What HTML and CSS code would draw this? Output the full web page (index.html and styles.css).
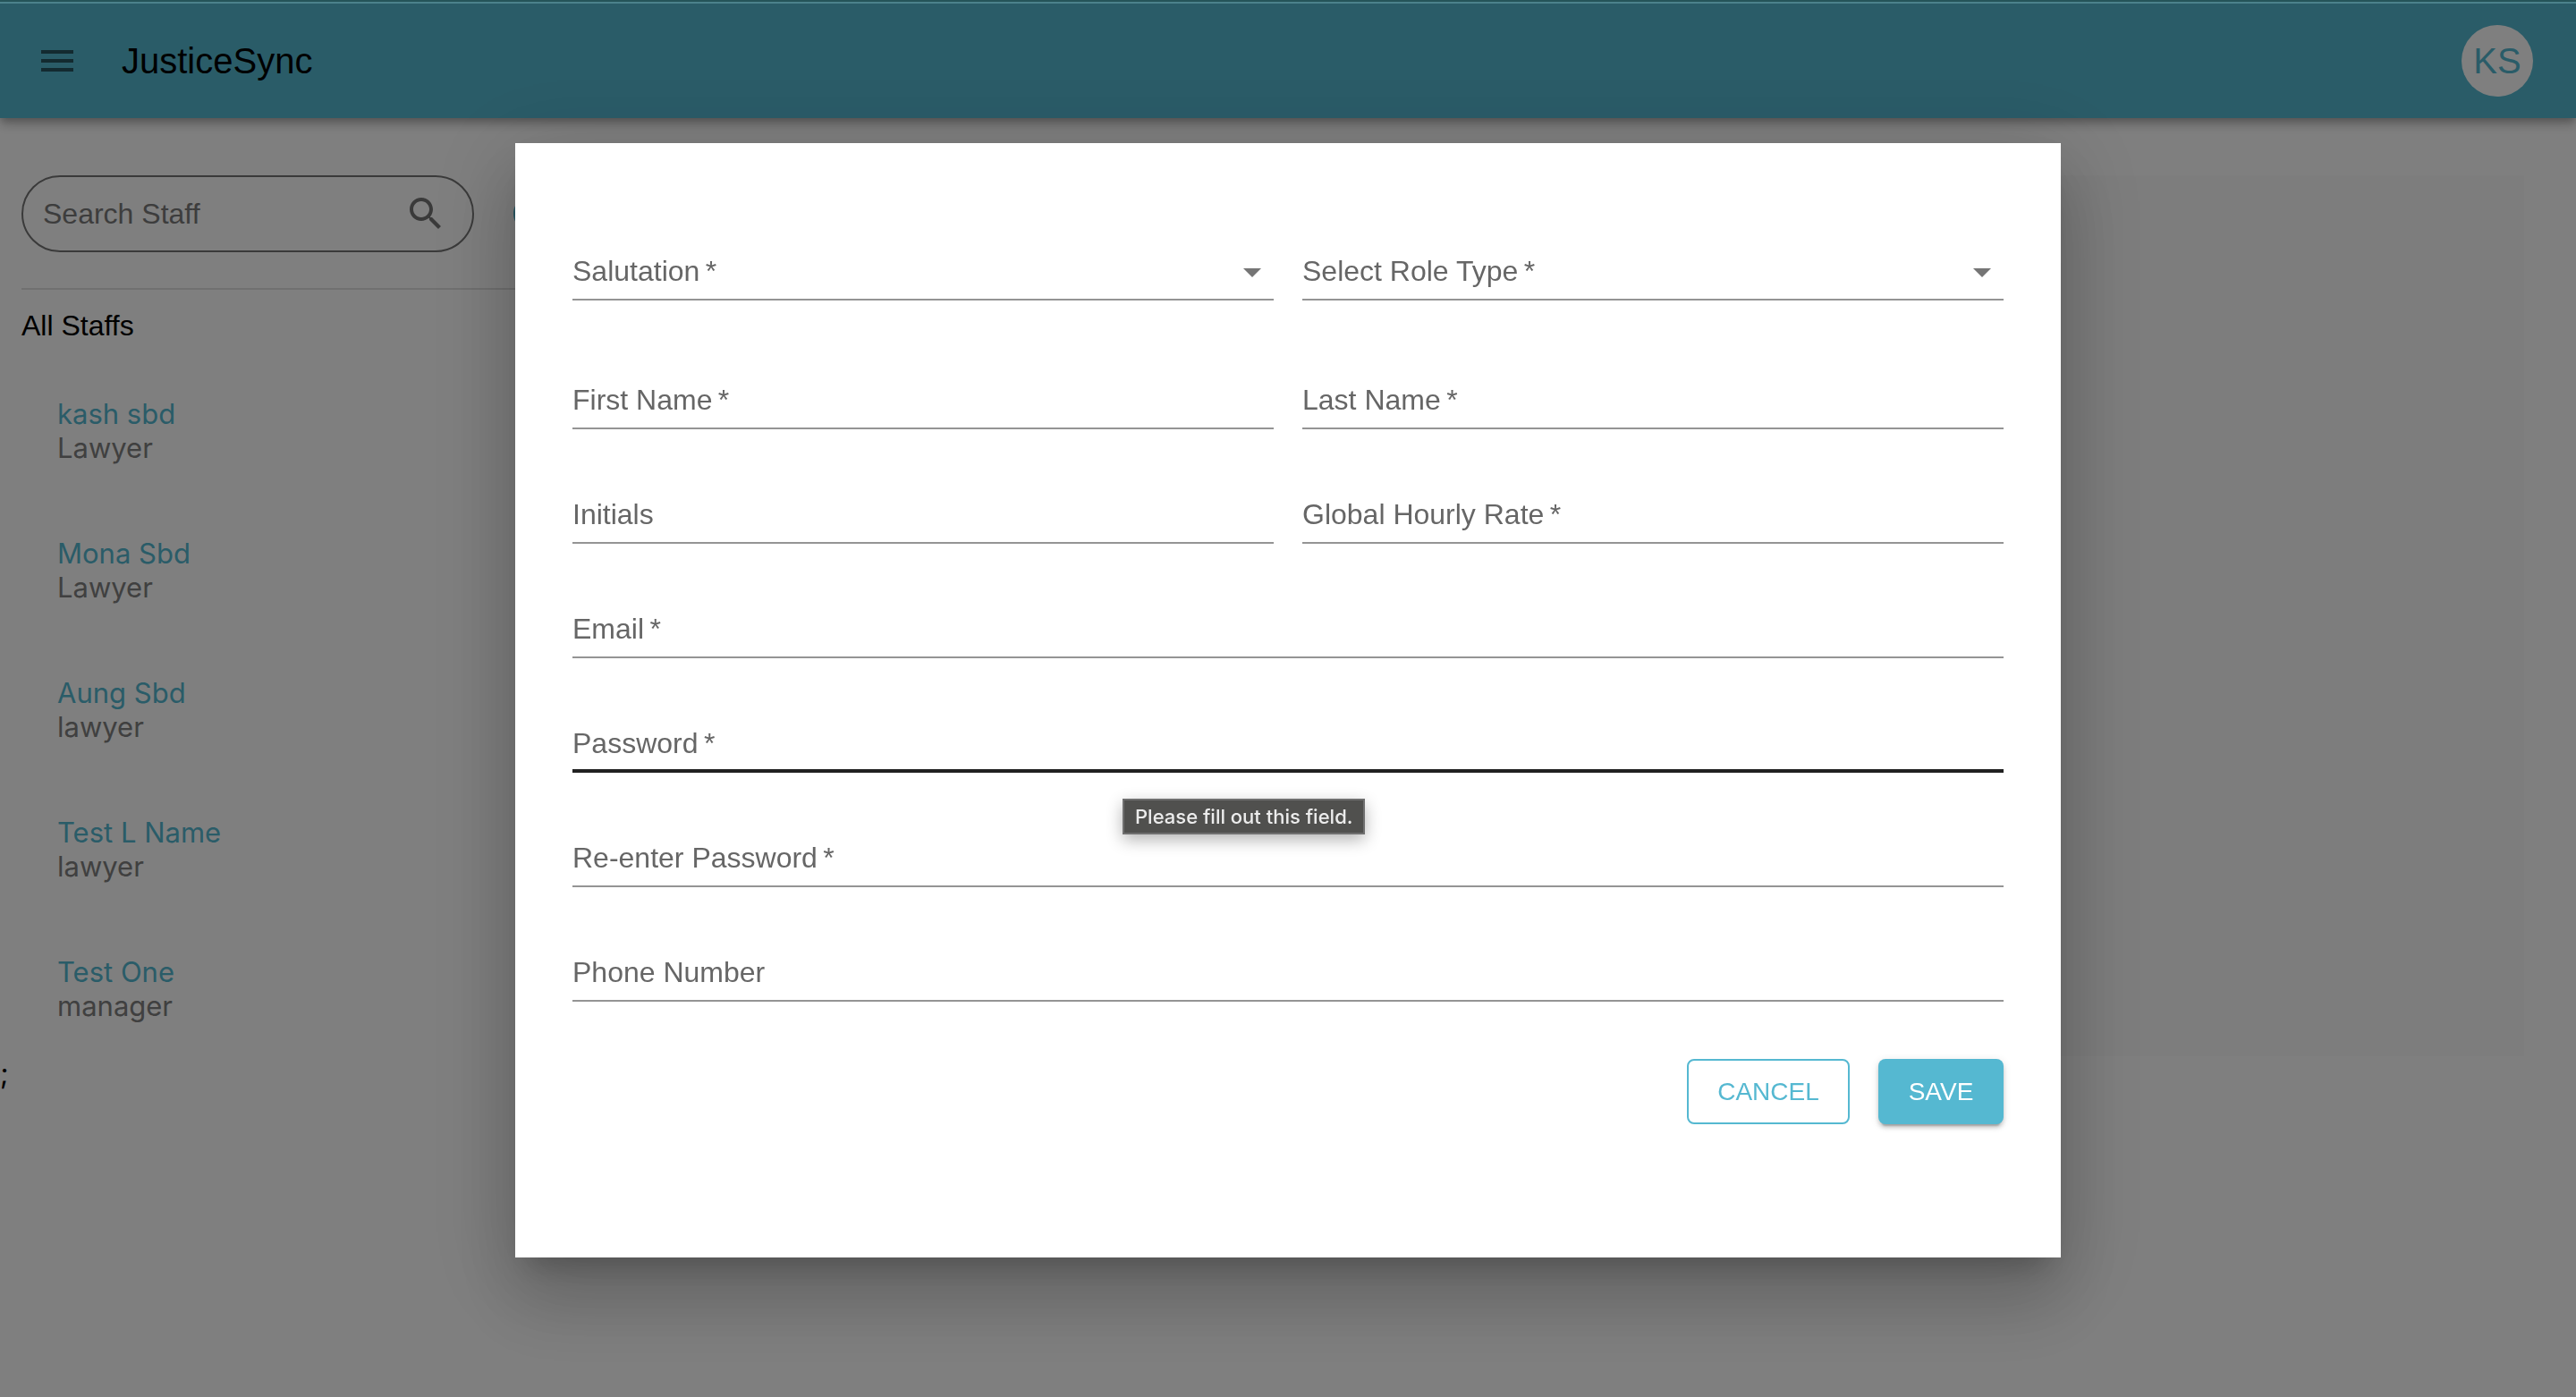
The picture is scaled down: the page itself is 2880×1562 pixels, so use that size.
FILE: index.html
```html
<!DOCTYPE html>
<html lang="en">
<head>
<meta charset="utf-8">
<meta name="viewport" content="width=device-width, initial-scale=1">
<title>JusticeSync</title>
<link rel="stylesheet" href="styles.css">
</head>
<body>
<header class="app-bar">
  <button class="icon-button" type="button" aria-label="Menu">
    <svg class="icon" viewBox="0 0 24 24"><path d="M3 18h18v-2H3v2zm0-5h18v-2H3v2zm0-7v2h18V6H3z"/></svg>
  </button>
  <h1 class="brand">JusticeSync</h1>
  <button class="avatar" type="button">KS</button>
</header>

<main class="page">
  <aside class="sidebar">
    <div class="toolbar">
      <div class="search">
        <input class="search-input" type="search" placeholder="Search Staff" aria-label="Search Staff">
        <svg class="icon" viewBox="0 0 24 24"><path d="M15.5 14h-.79l-.28-.27C15.41 12.59 16 11.11 16 9.5 16 5.91 13.09 3 9.5 3S3 5.91 3 9.5 5.91 16 9.5 16c1.61 0 3.09-.59 4.23-1.57l.27.28v.79l5 4.99L20.49 19l-4.99-5zm-6 0C7.01 14 5 11.99 5 9.5S7.01 5 9.5 5 14 7.01 14 9.5 11.99 14 9.5 14z"/></svg>
      </div>
      <button class="add-button" type="button" aria-label="Add staff">
        <svg class="icon" viewBox="0 0 24 24"><path d="M12 2C6.48 2 2 6.48 2 12s4.48 10 10 10 10-4.48 10-10S17.52 2 12 2zm5 11h-4v4h-2v-4H7v-2h4V7h2v4h4v2z"/></svg>
      </button>
    </div>
    <hr class="divider">
    <h2 class="list-title">All Staffs</h2>
    <ul class="staff-list">
      <li class="staff"><a class="staff-name" href="#">kash sbd</a><span class="staff-role">Lawyer</span></li>
      <li class="staff"><a class="staff-name" href="#">Mona Sbd</a><span class="staff-role">Lawyer</span></li>
      <li class="staff"><a class="staff-name" href="#">Aung Sbd</a><span class="staff-role">lawyer</span></li>
      <li class="staff"><a class="staff-name" href="#">Test L Name</a><span class="staff-role">lawyer</span></li>
      <li class="staff"><a class="staff-name" href="#">Test One</a><span class="staff-role">manager</span></li>
    </ul>
  </aside>
  <section class="details"></section>
</main>
<div class="stray">;</div>

<div class="backdrop">
  <form class="dialog" role="dialog" aria-label="Staff">
    <div class="fields">
      <div class="field field-select">
        <label class="label" for="salutation">Salutation&thinsp;*</label>
        <select class="control" id="salutation" required><option value=""></option></select>
        <svg class="icon arrow" viewBox="0 0 24 24"><path d="M7 10l5 5 5-5z"/></svg>
      </div>
      <div class="field field-select">
        <label class="label" for="role">Select Role Type&thinsp;*</label>
        <select class="control" id="role" required><option value=""></option></select>
        <svg class="icon arrow" viewBox="0 0 24 24"><path d="M7 10l5 5 5-5z"/></svg>
      </div>
      <div class="field">
        <label class="label" for="first">First Name&thinsp;*</label>
        <input class="control" id="first" type="text" required>
      </div>
      <div class="field">
        <label class="label" for="last">Last Name&thinsp;*</label>
        <input class="control" id="last" type="text" required>
      </div>
      <div class="field">
        <label class="label" for="initials">Initials</label>
        <input class="control" id="initials" type="text">
      </div>
      <div class="field">
        <label class="label" for="rate">Global Hourly Rate&thinsp;*</label>
        <input class="control" id="rate" type="text" required>
      </div>
      <div class="field field-wide">
        <label class="label" for="email">Email&thinsp;*</label>
        <input class="control" id="email" type="email" required>
      </div>
      <div class="field field-wide">
        <label class="label" for="password">Password&thinsp;*</label>
        <input class="control control-active" id="password" type="password" required>
        <span class="tooltip" role="tooltip">Please fill out this field.</span>
      </div>
      <div class="field field-wide">
        <label class="label" for="password2">Re-enter Password&thinsp;*</label>
        <input class="control" id="password2" type="password" required>
      </div>
      <div class="field field-wide">
        <label class="label" for="phone">Phone Number</label>
        <input class="control" id="phone" type="tel">
      </div>
    </div>
    <div class="actions">
      <button class="button button-outlined" type="button">CANCEL</button>
      <button class="button button-filled" type="submit">SAVE</button>
    </div>
  </form>
</div>
</body>
</html>
```

FILE: styles.css
```css
:root {
  --primary: #55b8d1;
  --muted: #757575;
  --sans: "Liberation Sans", Arial, sans-serif;
  --system: Inter, "Liberation Sans", sans-serif;
}

* {
  box-sizing: border-box;
}

body {
  margin: 0;
  min-height: 100vh;
  background: #fff;
  color: #000;
  font-family: var(--sans);
  font-size: 32px;
}

button,
input,
select {
  font: inherit;
}

button {
  border: 0;
  padding: 0;
  background: none;
  cursor: pointer;
}

.icon {
  display: block;
  flex: none;
  width: 48px;
  height: 48px;
  fill: var(--muted);
}

/* App bar */
.app-bar {
  position: relative;
  display: flex;
  align-items: center;
  height: 132px;
  padding: 4px 48px 0 24px;
  background: var(--primary);
  box-shadow: 0 4px 8px -2px rgba(0, 0, 0, 0.2), 0 8px 10px rgba(0, 0, 0, 0.14), 0 2px 20px rgba(0, 0, 0, 0.12);
}

.icon-button {
  padding: 16px;
  margin-right: 32px;
}

.icon-button .icon {
  fill: rgba(0, 0, 0, 0.54);
}

.brand {
  flex: 1;
  margin: 0;
  font-size: 40px;
  font-weight: 400;
  line-height: 64px;
}

.avatar {
  width: 80px;
  height: 80px;
  border-radius: 50%;
  background: #fff;
  color: var(--primary);
  font-size: 40px;
}

/* Page */
.page {
  display: grid;
  grid-template-columns: 640px 1fr;
  gap: 64px;
  padding: 64px 58px 0 24px;
}

.toolbar {
  display: flex;
  align-items: center;
  gap: 40px;
}

.search {
  display: flex;
  align-items: center;
  width: 506px;
  padding: 17px 28px 17px 22px;
  border: 2px solid var(--muted);
  border-radius: 43px;
}

.search-input {
  flex: 1;
  min-width: 0;
  height: 48px;
  padding: 0;
  border: 0;
  outline: 0;
  background: none;
}

.search-input::placeholder {
  color: #7a7a7a;
}

.add-button .icon {
  fill: var(--primary);
}

.divider {
  margin: 40px 0 16px;
  border: 0;
  border-top: 2px solid #e0e0e0;
}

.list-title {
  margin: 0 0 16px;
  font-size: 32px;
  font-weight: 400;
  line-height: 48px;
}

.staff-list {
  margin: 0;
  padding: 0;
  list-style: none;
  font-family: var(--system);
  font-size: 31px;
  line-height: 38px;
}

.staff {
  display: flex;
  flex-direction: column;
  align-items: flex-start;
  padding: 40px;
}

.staff:last-child {
  padding-bottom: 37px;
}

.staff-name {
  color: var(--primary);
  text-decoration: none;
}

.staff-role {
  color: #808080;
}

.details {
  background: #fafafa;
}

.stray {
  font-family: var(--system);
  line-height: 40px;
}

/* Dialog */
.backdrop {
  position: fixed;
  inset: 0;
  padding: 160px 20% 0;
  overflow: auto;
  background: linear-gradient(#255459 2px, #4b828c 2px, #4b828c 4px, transparent 4px), rgba(0, 0, 0, 0.5);
}

.dialog {
  padding: 80px 64px 149px;
  background: #fff;
  box-shadow: 0 22px 30px -14px rgba(0, 0, 0, 0.2), 0 48px 76px 6px rgba(0, 0, 0, 0.14), 0 18px 92px 16px rgba(0, 0, 0, 0.12);
}

.fields {
  display: grid;
  grid-template-columns: 1fr 1fr;
  gap: 32px;
}

.field {
  position: relative;
  display: grid;
  padding-top: 32px;
}

.field-select {
  padding-bottom: 16px;
}

.field-wide {
  grid-column: 1 / -1;
}

.label,
.control,
.arrow {
  grid-area: 1 / 1;
}

.label {
  padding: 8px 0 10px;
  color: #666;
  line-height: 46px;
  pointer-events: none;
}

.control {
  width: 100%;
  height: 64px;
  padding: 8px 0;
  border: 0;
  border-bottom: 2px solid #949494;
  border-radius: 0;
  outline: 0;
  background: none;
  appearance: none;
}

.control-active {
  border-bottom: 4px solid #212121;
}

.arrow {
  align-self: center;
  justify-self: end;
  pointer-events: none;
}

.tooltip {
  position: absolute;
  top: 125px;
  left: 615px;
  z-index: 1;
  padding: 5px 12px;
  border: 2px solid #6f6f6f;
  background: #50504e;
  box-shadow: 0 6px 18px rgba(0, 0, 0, 0.3);
  color: #ececec;
  font-family: var(--system);
  font-size: 22px;
  font-weight: 500;
  line-height: 26px;
  white-space: nowrap;
}

.actions {
  display: flex;
  justify-content: flex-end;
  gap: 32px;
  margin-top: 64px;
}

.button {
  min-width: 140px;
  height: 73px;
  padding: 0 32px;
  border-radius: 8px;
  font-size: 28px;
}

.button-outlined {
  min-width: 182px;
  padding: 0 30px;
  border: 2px solid var(--primary);
  color: var(--primary);
}

.button-filled {
  background: var(--primary);
  box-shadow: 0 6px 2px -4px rgba(0, 0, 0, 0.2), 0 4px 4px rgba(0, 0, 0, 0.14), 0 2px 10px rgba(0, 0, 0, 0.12);
  color: #fff;
}
```
